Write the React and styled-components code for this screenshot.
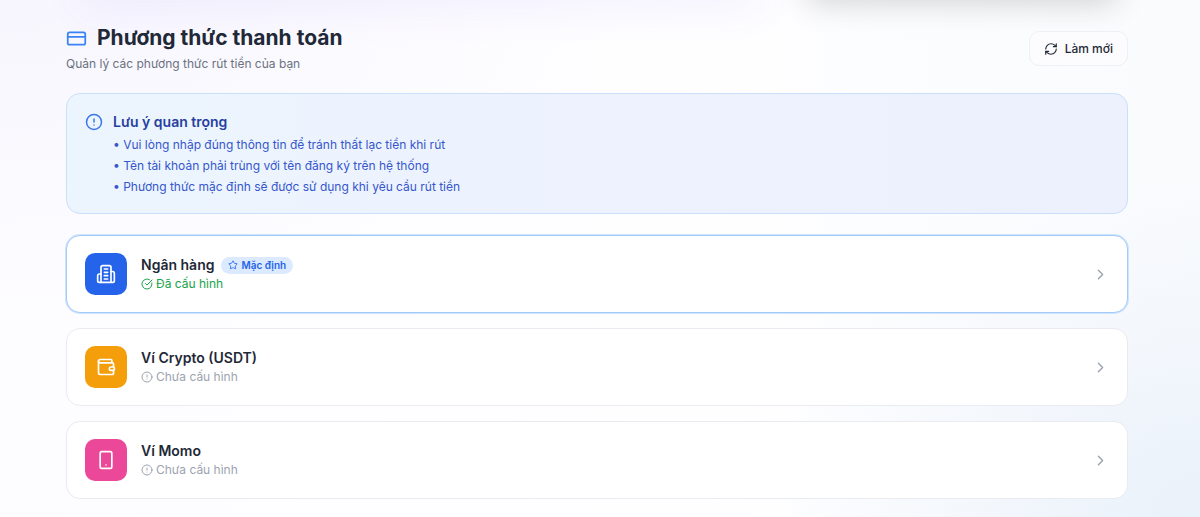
import React from "react";
import styled, {createGlobalStyle, css} from "styled-components";
import {
  ChevronRight,
  CircleAlert,
  CircleCheckBig,
  CreditCard,
  RefreshCw,
  Smartphone,
  Star,
  Wallet
} from "lucide-react";

const GlobalStyle = createGlobalStyle`
  *, *::before, *::after {
    box-sizing: border-box;
  }
  body {
    margin: 0;
    overflow-x: hidden;
    color: #1f2937;
    font-family: Inter, "Noto Sans", sans-serif;
  }
  h1, h2, h3, p, ul {
    margin: 0;
    padding: 0;
  }
  button {
    font: inherit;
    color: inherit;
    cursor: pointer;
  }
`;

const Page = styled.main`
  min-height: 100vh;
  padding: 0 72px 18px 66px;
  overflow: hidden;
  background:
    radial-gradient(ellipse 420px 340px at 100% 100%, #e9f1f9 0%, rgba(240, 245, 252, 0.7) 50%, transparent 100%),
    radial-gradient(ellipse 600px 300px at 0 0, #f7f6fe 0%, transparent 100%),
    linear-gradient(90deg, #fdfcff 0%, #fefeff 60%, #f9fbfd 100%);
`;

const SummaryRow = styled.div`
  display: grid;
  grid-template-columns: 68fr 32fr;
  gap: 22px;
  margin-top: -64px;
`;

const SummaryPanel = styled.div`
  height: 64px;
  border-radius: 14px;
  ${({$dark}) =>
    $dark
      ? css`
          box-shadow: 0 14px 32px -12px rgba(0, 0, 0, 0.18);
        `
      : css`
          box-shadow: 0 20px 44px -14px rgba(99, 70, 237, 0.08);
        `}
`;

const Header = styled.header`
  display: flex;
  justify-content: space-between;
  align-items: center;
  padding: 24px 0 20px;
`;

const Title = styled.h1`
  display: flex;
  align-items: center;
  gap: 10px;
  font-size: 21px;
  line-height: 28px;
  font-weight: 700;
  svg {
    color: #3b82f6;
  }
`;

const Subtitle = styled.p`
  margin-top: 2px;
  color: #6b7280;
  font-size: 12px;
  line-height: 19px;
`;

const RefreshButton = styled.button`
  display: flex;
  align-items: center;
  gap: 7px;
  height: 35px;
  padding: 0 14px;
  border: 1px solid #eff0f4;
  border-radius: 10px;
  background: #fcfcfe;
  font-size: 12px;
  font-weight: 500;
`;

const Notice = styled.section`
  display: flex;
  align-items: flex-start;
  gap: 10px;
  padding: 17px 18px 16px;
  border: 1px solid #c9dffa;
  border-radius: 14px;
  background: linear-gradient(90deg, #ecf5fe 0%, #edf2fe 50%, #ecf1fd 100%);
  > svg {
    margin-top: 2px;
    color: #3b76e8;
  }
`;

const NoticeTitle = styled.h2`
  color: #273f9f;
  font-size: 14px;
  line-height: 22px;
  font-weight: 600;
`;

const NoticeList = styled.ul`
  margin-top: 1px;
  list-style: none;
  color: #3556cc;
  font-size: 12px;
  line-height: 21px;
  li::before {
    content: "• ";
  }
`;

const Methods = styled.div`
  display: flex;
  flex-direction: column;
  gap: 15px;
  margin-top: 21px;
`;

const MethodCard = styled.button`
  display: flex;
  align-items: center;
  gap: 14px;
  width: 100%;
  padding: 17px 18px;
  border: 1px solid ${({$active}) => ($active ? "#a3cbfa" : "#e9ebf0")};
  border-radius: 14px;
  background: #fff;
  text-align: left;
  ${({$active}) =>
    $active &&
    css`
      box-shadow: 0 0 0 1px #cfe3fc;
    `}
  > svg {
    color: #9ca3af;
  }
`;

const MethodIcon = styled.span`
  display: flex;
  align-items: center;
  justify-content: center;
  width: 42px;
  height: 42px;
  border-radius: 10px;
  background: ${({$color}) => $color};
  color: #fff;
`;

const MethodInfo = styled.span`
  flex: 1;
`;

const MethodName = styled.span`
  display: flex;
  align-items: center;
  gap: 7px;
  font-size: 14px;
  line-height: 20px;
  font-weight: 600;
`;

const Badge = styled.span`
  display: flex;
  align-items: center;
  gap: 3px;
  padding: 0 7px;
  border-radius: 9px;
  background: #dbeafe;
  color: #2563eb;
  font-size: 10px;
  line-height: 17px;
`;

const Status = styled.span`
  display: flex;
  align-items: center;
  gap: 3px;
  color: ${({$done}) => ($done ? "#16a34a" : "#9ca3af")};
  font-size: 12px;
  line-height: 18px;
`;

const NOTES = [
  "Vui lòng nhập đúng thông tin để tránh thất lạc tiền khi rút",
  "Tên tài khoản phải trùng với tên đăng ký trên hệ thống",
  "Phương thức mặc định sẽ được sử dụng khi yêu cầu rút tiền"
];

// office block with two side wings
const BankIcon = ({size}) => (
  <svg
    width={size}
    height={size}
    viewBox="0 0 24 24"
    fill="none"
    stroke="currentColor"
    strokeWidth="2"
    strokeLinecap="round"
    strokeLinejoin="round"
  >
    <path d="M6 22V4a2 2 0 0 1 2-2h8a2 2 0 0 1 2 2v18Z" />
    <path d="M6 12H4a2 2 0 0 0-2 2v6a2 2 0 0 0 2 2h2" />
    <path d="M18 9h2a2 2 0 0 1 2 2v9a2 2 0 0 1-2 2h-2" />
    <path d="M10 6h4M10 10h4M10 14h4M10 18h4" />
  </svg>
);

const METHODS = [
  {id: "bank", name: "Ngân hàng", icon: BankIcon, color: "#2563eb", done: true, isDefault: true},
  {id: "crypto", name: "Ví Crypto (USDT)", icon: Wallet, color: "#f59e0b"},
  {id: "momo", name: "Ví Momo", icon: Smartphone, color: "#ec4899"}
];

const Method = ({name, icon: Icon, color, done, isDefault}) => (
  <MethodCard type="button" $active={isDefault}>
    <MethodIcon $color={color}>
      <Icon size={20} />
    </MethodIcon>
    <MethodInfo>
      <MethodName>
        {name}
        {isDefault && (
          <Badge>
            <Star size={10} />
            Mặc định
          </Badge>
        )}
      </MethodName>
      <Status $done={done}>
        {done ? <CircleCheckBig size={12} /> : <CircleAlert size={12} />}
        {done ? "Đã cấu hình" : "Chưa cấu hình"}
      </Status>
    </MethodInfo>
    <ChevronRight size={17} />
  </MethodCard>
);

export default function App() {
  return (
    <>
      <GlobalStyle />
      <Page>
        <SummaryRow>
          <SummaryPanel />
          <SummaryPanel $dark />
        </SummaryRow>
        <Header>
          <div>
            <Title>
              <CreditCard size={21} />
              Phương thức thanh toán
            </Title>
            <Subtitle>Quản lý các phương thức rút tiền của bạn</Subtitle>
          </div>
          <RefreshButton type="button">
            <RefreshCw size={14} />
            Làm mới
          </RefreshButton>
        </Header>
        <Notice>
          <CircleAlert size={18} />
          <div>
            <NoticeTitle>Lưu ý quan trọng</NoticeTitle>
            <NoticeList>
              {NOTES.map((note) => (
                <li key={note}>{note}</li>
              ))}
            </NoticeList>
          </div>
        </Notice>
        <Methods>
          {METHODS.map((method) => (
            <Method key={method.id} {...method} />
          ))}
        </Methods>
      </Page>
    </>
  );
}
